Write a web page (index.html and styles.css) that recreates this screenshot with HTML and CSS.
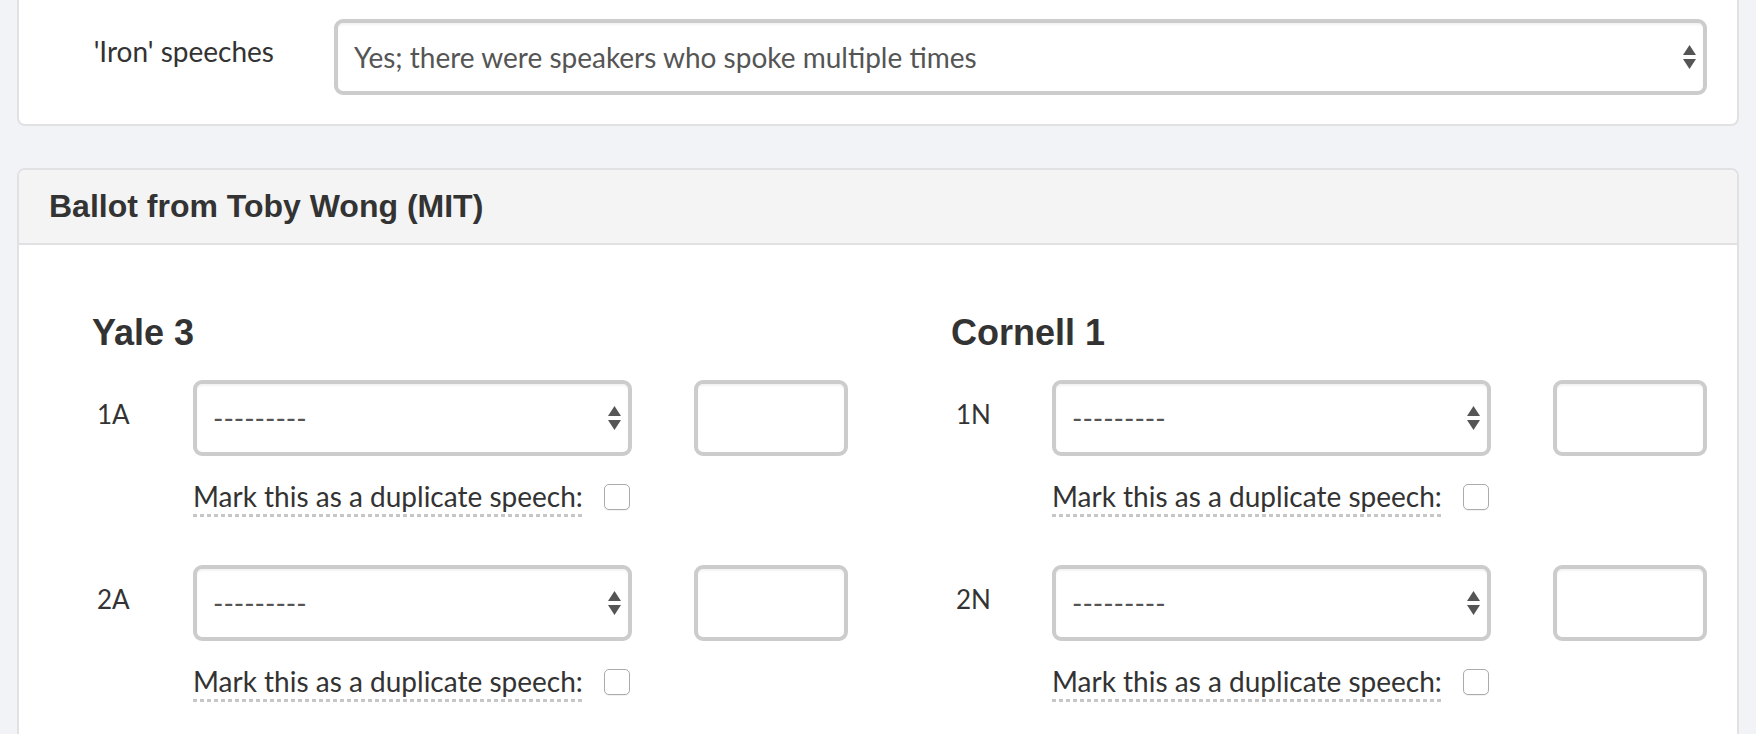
FILE: index.html
```html
<!DOCTYPE html>
<html lang="en">
<head>
<meta charset="utf-8">
<title>Ballot</title>
<link rel="stylesheet" href="styles.css">
</head>
<body>
<div class="page">
  <section class="card card-continued">
    <div class="form-row">
      <label class="row-label" for="iron">'Iron' speeches</label>
      <div class="select-wrap">
        <select id="iron" class="control select"><option>Yes; there were speakers who spoke multiple times</option></select>
        <svg class="arrows" viewBox="0 0 13 24" aria-hidden="true"><path d="M0 10 L6.5 0 L13 10 Z M0 14 L13 14 L6.5 24 Z"/></svg>
      </div>
    </div>
  </section>

  <section class="card">
    <header class="card-header">
      <h2 class="card-title">Ballot from Toby Wong (MIT)</h2>
    </header>
    <div class="card-body">
      <div class="team">
        <h3 class="team-name">Yale 3</h3>
        <div class="speech">
          <div class="speech-main">
            <label class="pos">1A</label>
            <div class="select-wrap">
              <select class="control select"><option>---------</option></select>
              <svg class="arrows" viewBox="0 0 13 24" aria-hidden="true"><path d="M0 10 L6.5 0 L13 10 Z M0 14 L13 14 L6.5 24 Z"/></svg>
            </div>
            <input class="control score" type="text">
          </div>
          <div class="dup">
            <span class="dup-label">Mark this as a duplicate speech:</span>
            <input class="dup-check" type="checkbox">
          </div>
        </div>
        <div class="speech">
          <div class="speech-main">
            <label class="pos">2A</label>
            <div class="select-wrap">
              <select class="control select"><option>---------</option></select>
              <svg class="arrows" viewBox="0 0 13 24" aria-hidden="true"><path d="M0 10 L6.5 0 L13 10 Z M0 14 L13 14 L6.5 24 Z"/></svg>
            </div>
            <input class="control score" type="text">
          </div>
          <div class="dup">
            <span class="dup-label">Mark this as a duplicate speech:</span>
            <input class="dup-check" type="checkbox">
          </div>
        </div>
      </div>

      <div class="team">
        <h3 class="team-name">Cornell 1</h3>
        <div class="speech">
          <div class="speech-main">
            <label class="pos">1N</label>
            <div class="select-wrap">
              <select class="control select"><option>---------</option></select>
              <svg class="arrows" viewBox="0 0 13 24" aria-hidden="true"><path d="M0 10 L6.5 0 L13 10 Z M0 14 L13 14 L6.5 24 Z"/></svg>
            </div>
            <input class="control score" type="text">
          </div>
          <div class="dup">
            <span class="dup-label">Mark this as a duplicate speech:</span>
            <input class="dup-check" type="checkbox">
          </div>
        </div>
        <div class="speech">
          <div class="speech-main">
            <label class="pos">2N</label>
            <div class="select-wrap">
              <select class="control select"><option>---------</option></select>
              <svg class="arrows" viewBox="0 0 13 24" aria-hidden="true"><path d="M0 10 L6.5 0 L13 10 Z M0 14 L13 14 L6.5 24 Z"/></svg>
            </div>
            <input class="control score" type="text">
          </div>
          <div class="dup">
            <span class="dup-label">Mark this as a duplicate speech:</span>
            <input class="dup-check" type="checkbox">
          </div>
        </div>
      </div>
    </div>
  </section>
</div>
</body>
</html>
```

FILE: styles.css
```css
* { box-sizing: border-box; }

html, body {
  margin: 0;
  padding: 0;
}

body {
  background: #f2f3f7;
  font-family: Lato, "Open Sans", sans-serif;
  font-size: 28px;
  color: #333;
  overflow: hidden;
}

.page {
  padding: 0 17px;
}

.card {
  background: #fff;
  border: 2px solid #e1e1e4;
  border-radius: 8px;
  margin-bottom: 42px;
}

.card-continued {
  border-top: 0;
  border-top-left-radius: 0;
  border-top-right-radius: 0;
  padding: 19px 30px 29px 0;
}

.form-row {
  display: flex;
  align-items: flex-start;
}

.row-label {
  width: 255px;
  flex: none;
  text-align: right;
  padding-top: 12px;
  line-height: 40px;
  margin-right: 60px;
}

.select-wrap {
  position: relative;
  flex: 1;
  min-width: 0;
}

.control {
  display: block;
  width: 100%;
  height: 76px;
  border: 4px solid #cccccc;
  border-radius: 9px;
  background: #fff;
  font-family: Lato, "Open Sans", sans-serif;
  font-size: 28px;
  color: #555;
  padding: 0 40px 0 16px;
  box-shadow: inset 0 2px 2px rgba(0, 0, 0, 0.05);
  outline: none;
}

.select {
  appearance: none;
  -webkit-appearance: none;
}

.arrows {
  position: absolute;
  right: 11px;
  top: 50%;
  width: 13px;
  height: 24px;
  margin-top: -12px;
  fill: #555;
  pointer-events: none;
}

.card-header {
  background: #f4f4f4;
  border-bottom: 2px solid #e1e1e4;
  border-radius: 6px 6px 0 0;
  padding: 19px 30px 19px;
}

.card-title {
  margin: 0;
  font-family: "Liberation Sans", Arial, sans-serif;
  font-weight: bold;
  font-size: 32px;
  line-height: 1.1;
  color: #333;
}

.card-body {
  display: grid;
  grid-template-columns: 756px 756px;
  column-gap: 103px;
  padding: 68px 30px 40px 73px;
}

.team-name {
  margin: 0 0 27px;
  font-family: "Liberation Sans", Arial, sans-serif;
  font-weight: bold;
  font-size: 36px;
  line-height: 1.1;
  color: #333;
}

.speech + .speech {
  margin-top: 48px;
}

.speech-main {
  display: flex;
  align-items: flex-start;
}

.pos {
  width: 101px;
  flex: none;
  padding: 16px 0 0 5px;
  font-size: 26px;
  line-height: 1.4;
  color: #333;
}

.score {
  width: 154px;
  flex: none;
  margin-left: 62px;
  padding: 0 16px;
}

.dup {
  display: flex;
  align-items: center;
  gap: 21px;
  margin: 22px 0 0 101px;
}

.dup-label {
  line-height: 36px;
  padding-bottom: 3px;
  background-image: linear-gradient(to right, #c6c6c6 60%, transparent 60%);
  background-size: 7px 3px;
  background-repeat: repeat-x;
  background-position: left bottom;
}

.dup-check {
  appearance: none;
  -webkit-appearance: none;
  width: 26px;
  height: 26px;
  margin: 0;
  border: 1px solid #ababab;
  border-radius: 5px;
  background: #fff;
  box-shadow: 0 1px 1px rgba(0, 0, 0, 0.06);
}
```
